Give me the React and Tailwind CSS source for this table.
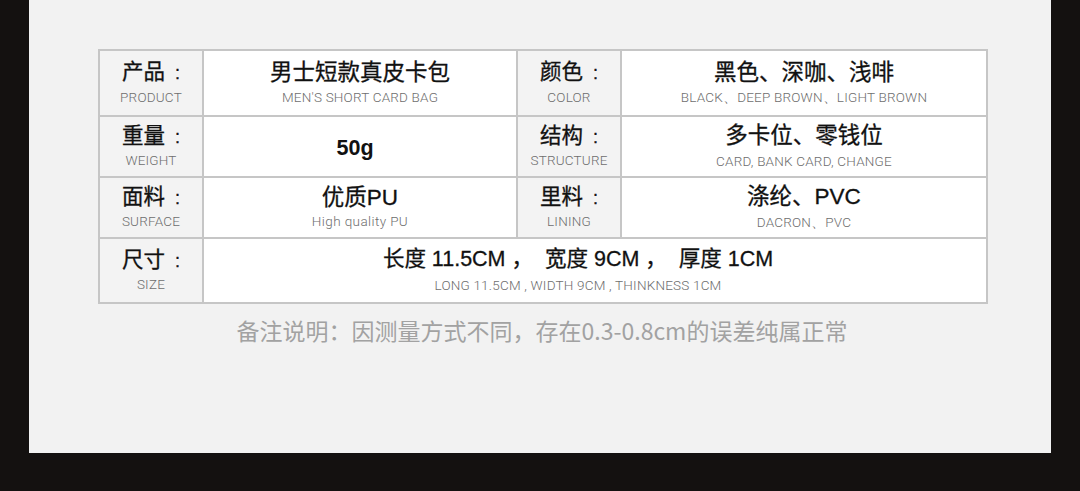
const CJK = "font-['Liberation_Sans','Noto_Sans_CJK_SC',sans-serif] font-normal [-webkit-text-stroke:0.3px_#111]";
const NOTE = "font-['Noto_Sans_CJK_SC','Noto_Sans',sans-serif]";
const SUB = "font-['Roboto','Liberation_Sans',sans-serif] font-light text-[13.5px] leading-none text-[#6e6e6e] tracking-[0.2px]";

function Label({ zh, en }) {
  return (
    <div className="flex flex-col items-center justify-center bg-[#f3f3f3]">
      <div className={`${CJK} text-[21.5px] leading-none text-[#111]`}>
        {zh}<span className="ml-[10px] text-[18px]">:</span>
      </div>
      <div className={`${SUB} mt-[7px]`}>{en}</div>
    </div>
  );
}

function Value({ zh, en }) {
  return (
    <div className="flex flex-col items-center justify-center bg-white">
      <div className={`${CJK} text-[22.5px] leading-none text-[#111]`}>{zh}</div>
      {en && <div className={`${SUB} mt-[7px]`}>{en}</div>}
    </div>
  );
}

export default function App() {
  return (
    <div className="w-[1080px] h-[491px] bg-[#141110] overflow-hidden">
      <div className="ml-[29px] w-[1022px] h-[453px] bg-[#f2f2f2] flex flex-col items-start">
        <div className="ml-[69px] mt-[49px] w-[890px] grid grid-cols-[102px_312px_102px_364px] grid-rows-[64px_59px_59px_63px] gap-[2px] p-[2px] bg-[#c6c6c6]">
          <Label zh="产品" en="PRODUCT" />
          <Value zh="男士短款真皮卡包" en="MEN'S SHORT CARD BAG" />
          <Label zh="颜色" en="COLOR" />
          <Value zh="黑色、深咖、浅啡" en="BLACK、DEEP BROWN、LIGHT BROWN" />

          <Label zh="重量" en="WEIGHT" />
          <div className="flex items-center justify-center bg-white pr-[10px]">
            <span className="font-['Liberation_Sans',sans-serif] font-bold text-[21.5px] leading-none text-[#111] pt-[4px]">50g</span>
          </div>
          <Label zh="结构" en="STRUCTURE" />
          <Value zh="多卡位、零钱位" en="CARD, BANK CARD, CHANGE" />

          <Label zh="面料" en="SURFACE" />
          <div className="flex flex-col items-center justify-center bg-white">
            <div className={`${CJK} text-[22.5px] leading-none text-[#111]`}>优质PU</div>
            <div className={`${SUB} mt-[6px] font-['Open_Sans',sans-serif] tracking-[0.4px]`}>High quality PU</div>
          </div>
          <Label zh="里料" en="LINING" />
          <Value zh="涤纶、PVC" en="DACRON、PVC" />

          <Label zh="尺寸" en="SIZE" />
          <div className="col-span-3 flex flex-col items-center justify-center bg-white pr-[34px]">
            <div className={`${CJK} text-[21.5px] leading-none text-[#111] whitespace-pre`}>长度 11.5CM ，  宽度 9CM ，  厚度 1CM</div>
            <div className={`${SUB} mt-[8px]`}>LONG 11.5CM , WIDTH 9CM , THINKNESS 1CM</div>
          </div>
        </div>
        <div className={`${NOTE} self-center mt-[15px] text-[23px] leading-none text-[#a2a2a2] ml-[4px]`}>
          备注说明：因测量方式不同，存在0.3-0.8cm的误差纯属正常
        </div>
      </div>
    </div>
  );
}
